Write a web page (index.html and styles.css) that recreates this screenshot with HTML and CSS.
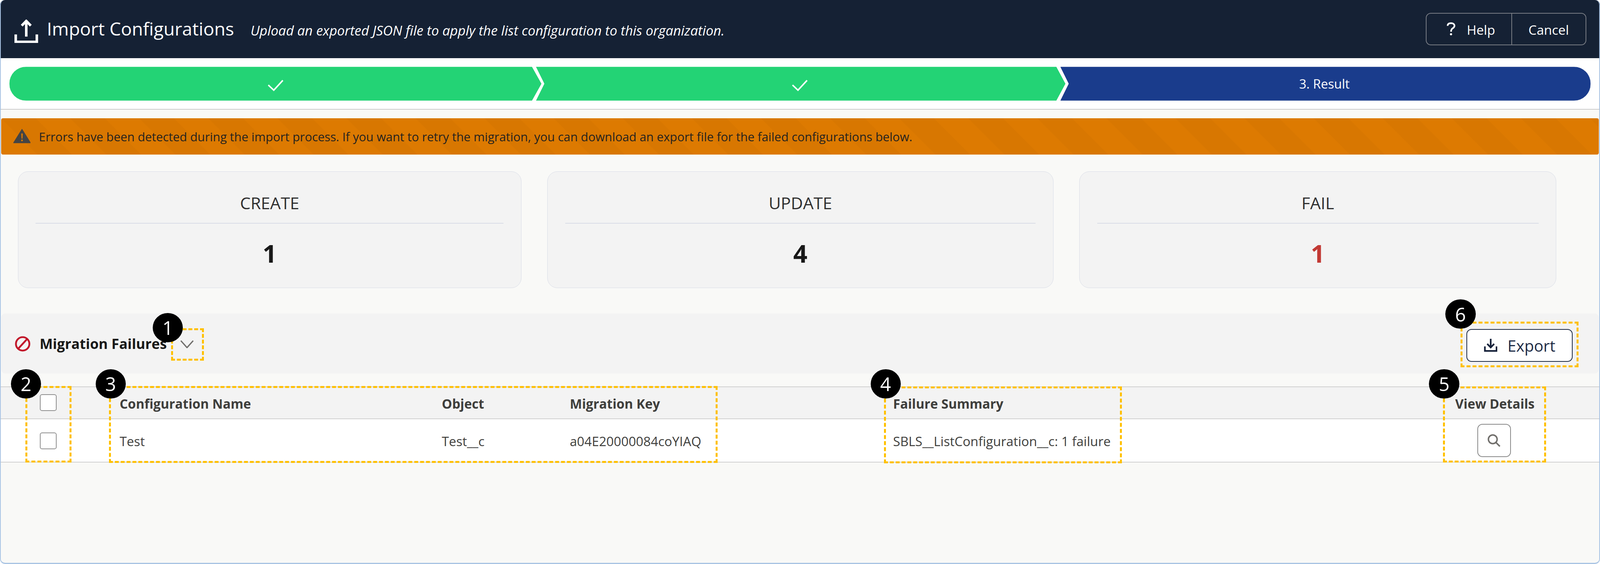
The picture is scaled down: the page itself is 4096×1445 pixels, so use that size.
FILE: index.html
```html
<!DOCTYPE html>
<html lang="en">
<head>
<meta charset="utf-8">
<title>Import Configurations</title>
<link rel="stylesheet" href="styles.css">
</head>
<body>
<div class="app">
  <header class="header">
    <svg class="icon-upload" viewBox="0 0 65 65" fill="none" stroke="#fff"><path class="upload-tray" d="M3.500 41V61.500H61.500V41"/><path class="upload-arrow" d="M32.500 5V47M20 17 32.500 4 45 17"/></svg>
    <h1 class="title">Import Configurations</h1>
    <p class="subtitle">Upload an exported JSON file to apply the list configuration to this organization.</p>
    <div class="btn-group">
      <button class="head-btn help-btn"><svg class="icon-help" viewBox="0 0 25 37" fill="none" stroke="#fff" stroke-width="4.5"><path d="M3 10C3 4.500 7 2.500 12.500 2.500S22 5.500 22 10C22 15 17 16 14.500 19 13 21 12.500 23 12.500 26"/><circle cx="12.500" cy="33" r="3" fill="#fff" stroke="none"/></svg>Help</button>
      <button class="head-btn cancel-btn">Cancel</button>
    </div>
  </header>

  <section class="steps-wrap">
    <div class="steps">
      <div class="step step-first"><svg class="icon-check" viewBox="0 0 44 32" fill="none" stroke="#fff" stroke-width="4"><path d="M2 15 17 29 42 2"/></svg></div>
      <div class="step step-mid"><svg class="icon-check" viewBox="0 0 44 32" fill="none" stroke="#fff" stroke-width="4"><path d="M2 15 17 29 42 2"/></svg></div>
      <div class="step step-last">3. Result</div>
    </div>
  </section>

  <div class="alert">
    <svg class="icon-warn" viewBox="0 0 48 40"><path d="M24 1.500 47 38.500H1Z" fill="#444" stroke="#444" stroke-width="2" stroke-linejoin="round"/><path d="M22 13h4l-.7 14h-2.600Z" fill="#dd7a01"/><circle cx="24" cy="32" r="2.400" fill="#dd7a01"/></svg>
    <span class="alert-text">Errors have been detected during the import process. If you want to retry the migration, you can download an export file for the failed configurations below.</span>
  </div>

  <section class="stats">
    <div class="card"><div class="card-label">CREATE</div><div class="card-value">1</div></div>
    <div class="card"><div class="card-label">UPDATE</div><div class="card-value">4</div></div>
    <div class="card"><div class="card-label">FAIL</div><div class="card-value card-value-fail">1</div></div>
  </section>

  <section class="section-bar">
    <svg class="icon-ban" viewBox="0 0 43 43" fill="none" stroke="#c2182b" stroke-width="5"><circle cx="21.500" cy="21.500" r="18.500"/><path d="M34 8 9 35"/></svg>
    <h2 class="section-title">Migration Failures</h2>
    <svg class="icon-chevron" viewBox="0 0 36 22" fill="none" stroke="#706e6b" stroke-width="3.500"><path d="M1 1 18 20 35 1"/></svg>
    <button class="export-btn"><svg class="icon-export" viewBox="0 0 37 36" fill="none" stroke="#16213a" stroke-width="4.500"><path d="M2.500 21V33.500H34.500V21"/><path d="M18.500 0V23M9 14 18.500 24 28 14"/></svg>Export</button>
  </section>

  <section class="table">
    <div class="tr th">
      <div class="cell cell-check"><span class="checkbox"></span></div>
      <div class="cell">Configuration Name</div>
      <div class="cell">Object</div>
      <div class="cell">Migration Key</div>
      <div class="cell">Failure Summary</div>
      <div class="cell cell-center">View Details</div>
    </div>
    <div class="tr td">
      <div class="cell cell-check"><span class="checkbox"></span></div>
      <div class="cell">Test</div>
      <div class="cell">Test__c</div>
      <div class="cell">a04E20000084coYIAQ</div>
      <div class="cell">SBLS__ListConfiguration__c: 1 failure</div>
      <div class="cell cell-center cell-action"><button class="view-btn"><svg class="icon-search" viewBox="0 0 36 36" fill="none" stroke="#706e6b" stroke-width="4"><circle cx="14.500" cy="14.500" r="12"/><path d="M23 23 34 34"/></svg></button></div>
    </div>
  </section>

  <div class="mark mark-1"></div>
  <div class="mark mark-2"></div>
  <div class="mark mark-3"></div>
  <div class="mark mark-4"></div>
  <div class="mark mark-5"></div>
  <div class="mark mark-6"></div>
  <div class="badge badge-1">1</div>
  <div class="badge badge-2">2</div>
  <div class="badge badge-3">3</div>
  <div class="badge badge-4">4</div>
  <div class="badge badge-5">5</div>
  <div class="badge badge-6">6</div>
</div>
</body>
</html>
```
FILE: styles.css
```css
* { box-sizing: border-box; }
html, body { margin: 0; padding: 0; background: #fff; overflow: hidden; }
body { width: 4096px; height: 1445px; }

.app {
  zoom: 0.9309;
  position: relative;
  width: 4400px;
  height: 1552px;
  overflow: hidden;
  background: #f9f9f7;
  border-radius: 14px;
  font-family: "Open Sans", "Noto Sans", "Liberation Sans", sans-serif;
  font-stretch: 88%;
  color: #3e3e3c;
}
.app::after {
  content: "";
  position: absolute;
  inset: 0;
  border: solid #a9c4e4;
  border-width: 0 3px 4px 3px;
  border-radius: 14px;
  pointer-events: none;
}

/* header */
.header {
  display: flex;
  align-items: center;
  height: 160px;
  padding: 0 38px 0 40px;
  background: #152134;
  color: #fff;
}
.icon-upload { width: 65px; height: 65px; margin: 12px 24px 0 0; flex: none; }
.upload-tray { stroke-width: 7; }
.upload-arrow { stroke-width: 7; }
.title { margin: -4px 45px 0 0; font-size: 50px; font-weight: 400; white-space: nowrap; }
.subtitle { margin: 6px 0 0; font-size: 37.1px; font-style: italic; white-space: nowrap; }
.btn-group {
  display: flex;
  height: 90px;
  margin: 0 0 0 auto;
  border: 3px solid #777b83;
  border-radius: 14px;
}
.head-btn {
  display: flex;
  align-items: center;
  border: 0;
  padding: 3px 0 0;
  background: none;
  color: #fff;
  font: inherit;
  font-stretch: inherit;
  font-size: 36px;
}
.help-btn { width: 235px; padding-left: 55px; gap: 31px; border-right: 3px solid #777b83; }
.cancel-btn { width: 202px; justify-content: center; }
.icon-help { width: 25px; height: 37px; margin-top: -3px; }

/* steps */
.steps-wrap {
  height: 142px;
  padding: 24px 26px 0;
  background: #fff;
  border-bottom: 3px solid #ccc;
}
.steps { display: flex; height: 93px; }
.step {
  display: flex;
  align-items: center;
  justify-content: center;
  color: #fff;
  font-size: 35px;
  padding-right: 6px;
}
.step-first {
  width: 1463px;
  padding-right: 0;
  background: #23d375;
  border-radius: 46px 0 0 46px;
  clip-path: polygon(0 0, calc(100% - 26px) 0, 100% 50%, calc(100% - 26px) 100%, 0 100%);
}
.step-mid {
  width: 1456px;
  margin-left: -15px;
  background: #23d375;
  clip-path: polygon(0 0, calc(100% - 25px) 0, 100% 50%, calc(100% - 25px) 100%, 0 100%, 23px 50%);
}
.step-last {
  width: 1458px;
  margin-left: -14px;
  background: #1a3c8c;
  border-radius: 0 46px 46px 0;
  clip-path: polygon(0 0, 100% 0, 100% 100%, 0 100%, 23px 50%);
}
.icon-check { width: 44px; height: 32px; margin-top: 9px; }

/* alert */
.alert {
  display: flex;
  align-items: center;
  gap: 23px;
  height: 99px;
  margin: 24px 3px 0;
  padding-left: 33px;
  border-radius: 5px;
  background-color: #dd7a01;
  background-image: linear-gradient(45deg, rgba(0,0,0,.025) 25%, transparent 25%, transparent 50%, rgba(0,0,0,.025) 50%, rgba(0,0,0,.025) 75%, transparent 75%);
  background-size: 190px 190px;
  color: #25231f;
  font-size: 33.1px;
}
.icon-warn { width: 48px; height: 40px; flex: none; margin-top: -2px; }
.alert-text { white-space: nowrap; }

/* stats */
.stats {
  display: grid;
  grid-template-columns: 1385px 1392px 1312px;
  gap: 71px;
  height: 321px;
  margin-top: 47px;
  padding-left: 49px;
}
.card {
  display: flex;
  flex-direction: column;
  padding: 0 48px;
  background: #f3f3f3;
  border: 2px solid #d9dde7;
  border-radius: 28px;
  text-align: center;
}
.card-label {
  height: 142px;
  padding-top: 53px;
  border-bottom: 3px solid #d9dde7;
  font-size: 46px;
  font-weight: 500;
  color: #2e2e2e;
}
.card-value { padding-top: 38px; font-size: 68px; font-weight: 700; color: #181818; line-height: 1.3; }
.card-value-fail { color: #c23934; }

/* section bar */
.section-bar {
  display: flex;
  align-items: center;
  height: 165px;
  margin: 70px 3px 0;
  padding: 0 72px 0 38px;
  background: #f3f3f3;
  border-radius: 12px;
}
.icon-ban { width: 43px; height: 43px; flex: none; margin-top: 2px; }
.section-title { margin: 0 0 0 25px; font-size: 38.4px; font-weight: 700; color: #181818; white-space: nowrap; }
.icon-chevron { width: 36px; height: 22px; margin: 4px 0 0 38px; flex: none; }
.export-btn {
  display: flex;
  align-items: center;
  justify-content: center;
  gap: 28px;
  width: 292px;
  height: 90px;
  margin: 11px 0 0 auto;
  border: 3px solid #1d2b45;
  border-radius: 14px;
  background: #fff;
  color: #1d2b45;
  font: inherit;
  font-stretch: inherit;
  font-size: 43px;
}
.icon-export { width: 37px; height: 36px; }

/* table */
.table { margin-top: 35px; }
.tr {
  display: grid;
  grid-template-columns: 329px 886px 352px 889px 1366px 1fr;
  align-items: center;
  border-bottom: 3px solid #d0d0d0;
}
.th { height: 91px; background: #f3f3f3; border-top: 3px solid #d0d0d0; font-size: 35.6px; font-weight: 700; color: #3e3e3c; }
.td { height: 119px; background: #fff; font-size: 35.6px; }
.cell { white-space: nowrap; }
.th .cell { padding-top: 6px; }
.td .cell { padding-top: 4px; }
.th .cell-check { padding-top: 0; }
.td .cell-check { padding-top: 2px; }
.td .cell-action { padding-top: 0; }
.cell-center { text-align: center; }
.checkbox {
  display: block;
  width: 46px;
  height: 46px;
  margin-left: 110px;
  background: #fff;
  border: 3px solid #8f8f8f;
  border-radius: 6px;
}
.view-btn {
  display: inline-flex;
  align-items: center;
  justify-content: center;
  width: 92px;
  height: 92px;
  margin-right: 4px;
  padding: 0;
  background: #fff;
  border: 3px solid #8a8a8a;
  border-radius: 14px;
  vertical-align: middle;
}
.icon-search { width: 36px; height: 36px; }

/* annotations */
.mark { position: absolute; border: 6px dashed #ffc000; }
.mark-1 { left: 471px; top: 903px; width: 90px; height: 90px; }
.mark-2 { left: 70px; top: 1062px; width: 127px; height: 211px; }
.mark-3 { left: 300px; top: 1062px; width: 1673px; height: 212px; }
.mark-4 { left: 2431px; top: 1064px; width: 654px; height: 211px; }
.mark-5 { left: 3968px; top: 1063px; width: 284px; height: 210px; }
.mark-6 { left: 4017px; top: 885px; width: 324px; height: 126px; }
.badge {
  position: absolute;
  display: flex;
  align-items: center;
  justify-content: center;
  width: 83px;
  height: 81px;
  border-radius: 50%;
  background: #000;
  color: #fff;
  font-size: 52px;
  line-height: 1;
}
.badge-1 { left: 420px; top: 861px; }
.badge-2 { left: 30px; top: 1016px; }
.badge-3 { left: 263px; top: 1016px; }
.badge-4 { left: 2394px; top: 1016px; }
.badge-5 { left: 3930px; top: 1016px; }
.badge-6 { left: 3975px; top: 824px; }
```
